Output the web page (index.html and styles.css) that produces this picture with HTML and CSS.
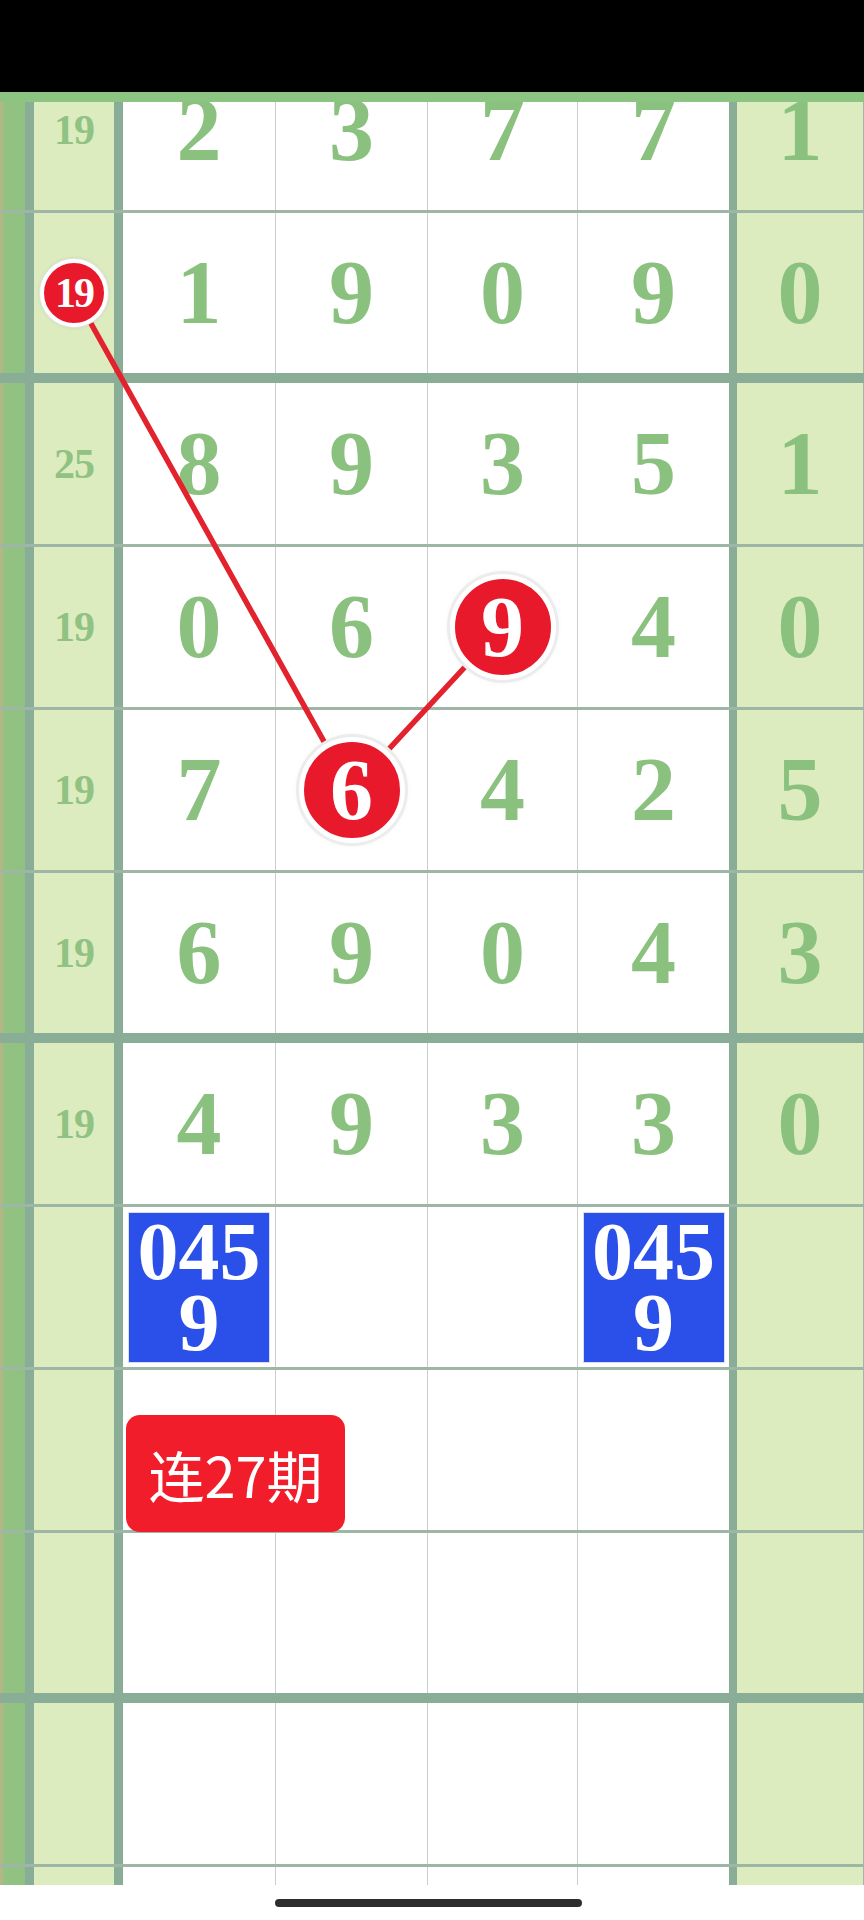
FILE: index.html
```html
<!DOCTYPE html>
<html lang="zh">
<head>
<meta charset="utf-8">
<title>走势图</title>
<link rel="stylesheet" href="styles.css">
</head>
<body>
<div class="status"></div>
<div class="topband"></div>
<div class="viewport">
  <div class="table">
    <div class="row">
      <div class="strip"></div><div class="side">19</div>
      <div class="cell">2</div><div class="cell">3</div><div class="cell c3">7</div><div class="cell c4">7</div>
      <div class="right">1</div>
    </div>
    <div class="row end">
      <div class="strip"></div><div class="side"><span class="ball small">19</span></div>
      <div class="cell">1</div><div class="cell">9</div><div class="cell c3">0</div><div class="cell c4">9</div>
      <div class="right">0</div>
    </div>

    <div class="row g">
      <div class="strip"></div><div class="side">25</div>
      <div class="cell">8</div><div class="cell">9</div><div class="cell c3">3</div><div class="cell c4">5</div>
      <div class="right">1</div>
    </div>
    <div class="row">
      <div class="strip"></div><div class="side">19</div>
      <div class="cell">0</div><div class="cell">6</div><div class="cell c3"><span class="ball big">9</span></div><div class="cell c4">4</div>
      <div class="right">0</div>
    </div>
    <div class="row">
      <div class="strip"></div><div class="side">19</div>
      <div class="cell">7</div><div class="cell"><span class="ball big">6</span></div><div class="cell c3">4</div><div class="cell c4">2</div>
      <div class="right">5</div>
    </div>
    <div class="row end">
      <div class="strip"></div><div class="side">19</div>
      <div class="cell">6</div><div class="cell">9</div><div class="cell c3">0</div><div class="cell c4">4</div>
      <div class="right">3</div>
    </div>

    <div class="row g">
      <div class="strip"></div><div class="side">19</div>
      <div class="cell">4</div><div class="cell">9</div><div class="cell c3">3</div><div class="cell c4">3</div>
      <div class="right">0</div>
    </div>
    <div class="row">
      <div class="strip"></div><div class="side"></div>
      <div class="cell"><span class="box">0459</span></div><div class="cell"></div><div class="cell c3"></div><div class="cell c4"><span class="box">0459</span></div>
      <div class="right"></div>
    </div>
    <div class="row">
      <div class="strip"></div><div class="side"></div>
      <div class="cell"><span class="badge">连27期</span></div><div class="cell"></div><div class="cell c3"></div><div class="cell c4"></div>
      <div class="right"></div>
    </div>
    <div class="row end">
      <div class="strip"></div><div class="side"></div>
      <div class="cell"></div><div class="cell"></div><div class="cell c3"></div><div class="cell c4"></div>
      <div class="right"></div>
    </div>

    <div class="row g">
      <div class="strip"></div><div class="side"></div>
      <div class="cell"></div><div class="cell"></div><div class="cell c3"></div><div class="cell c4"></div>
      <div class="right"></div>
    </div>
    <div class="row">
      <div class="strip"></div><div class="side"></div>
      <div class="cell"></div><div class="cell"></div><div class="cell c3"></div><div class="cell c4"></div>
      <div class="right"></div>
    </div>

    <svg class="trend" width="864" height="800" viewBox="0 0 864 800">
      <polyline points="74,243 351,740 502,577" fill="none" stroke="#e2222d" stroke-width="5.5" stroke-linejoin="round"/>
    </svg>
  </div>
</div>
<div class="home"><div class="bar"></div></div>
</body>
</html>
```
FILE: styles.css
```css
html, body {
  margin: 0;
  padding: 0;
}
body {
  width: 864px;
  height: 1920px;
  overflow: hidden;
  background: #ffffff;
  font-family: "Liberation Serif", "Times New Roman", serif;
}
.status {
  height: 92px;
  background: #000000;
}
.topband {
  height: 10px;
  background: #8cc582;
}
.viewport {
  height: 1783px;
  overflow: hidden;
}
.table {
  position: relative;
  margin-top: -52px;
}
.row {
  display: grid;
  grid-template-columns: 34px 89px 153px 152px 150px 151px 1fr;
  height: 163px;
  box-sizing: border-box;
  border-bottom: 3px solid #9db6a6;
}
.row.g {
  height: 164px;
}
.row.end {
  height: 170px;
  border-bottom: 10px solid #89ad96;
}
.strip {
  border-right: 9px solid #89ad96;
  background: linear-gradient(to right, #c4b08a 0, #93c282 4px, #8fc180 100%);
}
.side {
  border-right: 9px solid #89ad96;
  background: #ddecbf;
  display: flex;
  align-items: center;
  justify-content: center;
  font-weight: bold;
  font-size: 42px;
  line-height: 1;
  color: #90c283;
  letter-spacing: -1px;
}
.cell {
  position: relative;
  border-right: 1px solid #c9cfcb;
  display: flex;
  align-items: center;
  justify-content: center;
  font-weight: bold;
  font-size: 90px;
  line-height: 1;
  color: #8bc17f;
}
.cell.c4 {
  border-right: none;
}
.right {
  border-left: 8px solid #89ad96;
  border-right: 1px solid #a6b3ac;
  background: #ddecbf;
  display: flex;
  align-items: center;
  justify-content: center;
  font-weight: bold;
  font-size: 90px;
  line-height: 1;
  color: #8bc17f;
}
.trend {
  position: absolute;
  left: 0;
  top: 0;
  z-index: 1;
  pointer-events: none;
}
.ball {
  position: relative;
  z-index: 2;
  display: flex;
  align-items: center;
  justify-content: center;
  border-radius: 50%;
  background: #e8192b;
  color: #ffffff;
  font-weight: bold;
  line-height: 1;
  border-style: solid;
  border-color: #ffffff;
}
.ball.small {
  width: 60px;
  height: 60px;
  border-width: 4px;
  font-size: 42px;
  letter-spacing: -2px;
  box-shadow: 0 0 0 1px #e4e4e4, 0 0 4px rgba(0, 0, 0, 0.12);
}
.ball.big {
  width: 96px;
  height: 96px;
  border-width: 5px;
  font-size: 86px;
  box-shadow: 0 0 0 3px #ececec, 0 0 6px rgba(0, 0, 0, 0.12);
}
.box {
  width: 142px;
  height: 151px;
  box-sizing: border-box;
  border: 1px solid #d6def7;
  background: #2b50e9;
  color: #ffffff;
  font-weight: bold;
  font-size: 82px;
  line-height: 71px;
  text-align: center;
  word-break: break-all;
  display: flex;
  align-items: center;
  justify-content: center;
  padding: 0 4px;
}
.badge {
  position: absolute;
  left: 3px;
  top: 45px;
  z-index: 3;
  width: 219px;
  height: 117px;
  border-radius: 14px;
  background: #f11d2a;
  color: #ffffff;
  font-family: "Noto Sans CJK SC", "Noto Sans", sans-serif;
  font-weight: normal;
  font-size: 56px;
  line-height: 1;
  display: flex;
  align-items: center;
  justify-content: center;
}
.home {
  height: 35px;
  box-sizing: border-box;
  padding-top: 14px;
  display: flex;
  justify-content: center;
}
.bar {
  width: 307px;
  height: 8px;
  border-radius: 4px;
  background: #2e2e2e;
  margin-right: 7px;
}
```
